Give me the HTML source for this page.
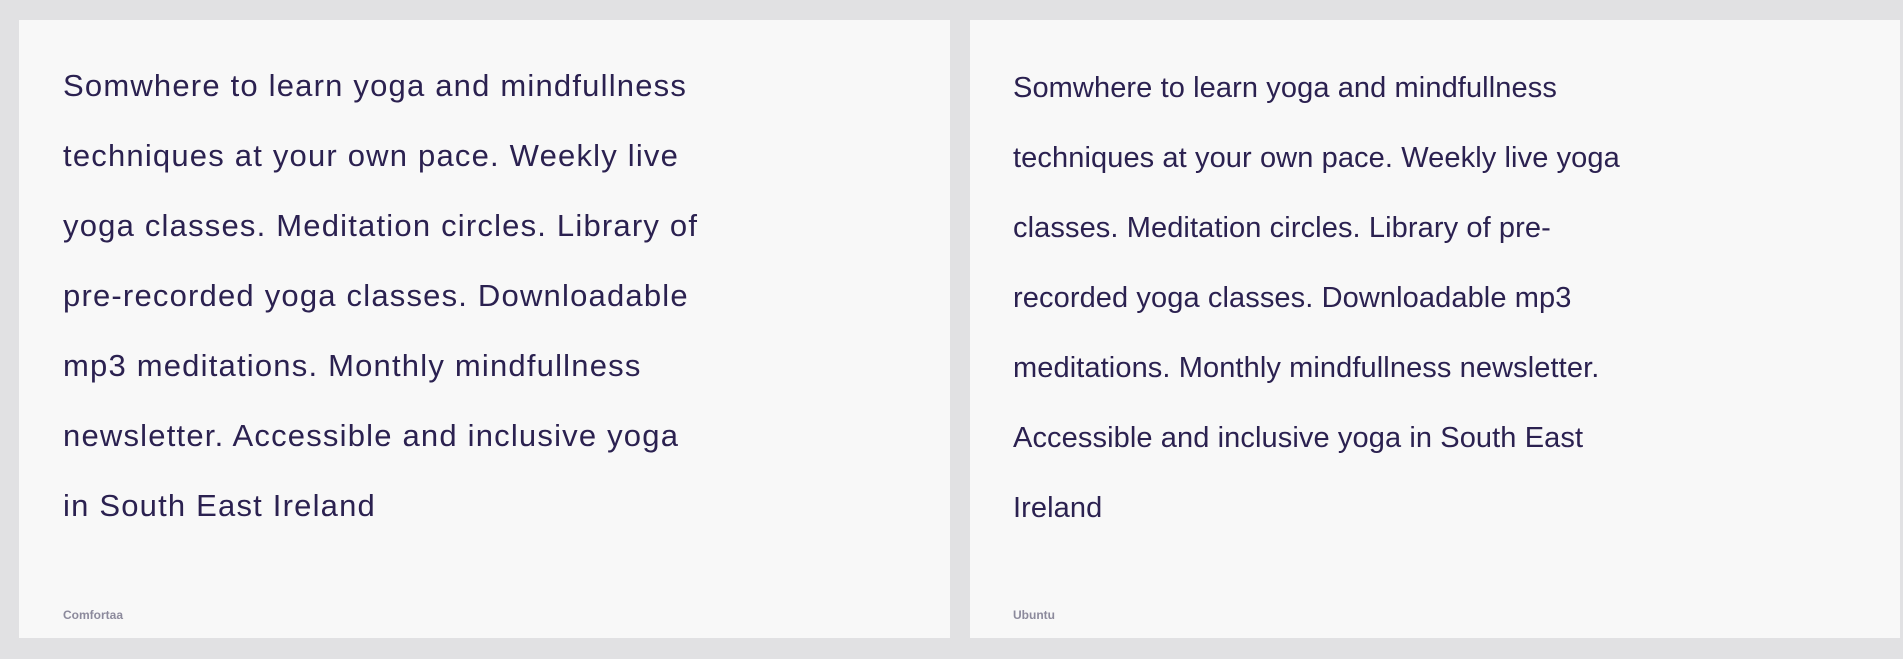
<!DOCTYPE html>
<html><head><style>
html,body{margin:0;padding:0;}
body{width:1903px;height:659px;background:#e1e1e3;position:relative;overflow:hidden;font-family:"Liberation Sans",sans-serif;}
.card{position:absolute;top:20px;height:618px;background:#f8f8f8;}
.t{position:absolute;color:#2b2150;font-size:31px;line-height:70px;white-space:nowrap;}
.l{position:absolute;top:608px;font-size:12px;color:#8c8a9c;font-weight:bold;}
</style></head><body>
<div class="card" style="left:19px;width:931px;"></div>
<div class="card" style="left:970px;width:930px;"></div>
<div class="t" style="left:63px;top:51px;letter-spacing:1.2px;">Somwhere to learn yoga and mindfullness<br>techniques at your own pace. Weekly live<br>yoga classes. Meditation circles. Library of<br>pre-recorded yoga classes. Downloadable<br>mp3 meditations. Monthly mindfullness<br>newsletter. Accessible and inclusive yoga<br>in South East Ireland</div>
<div class="l" style="left:63px;">Comfortaa</div>
<div class="t" style="left:1013px;top:53px;font-size:29px;letter-spacing:0.1px;">Somwhere to learn yoga and mindfullness<br>techniques at your own pace. Weekly live yoga<br>classes. Meditation circles. Library of pre-<br>recorded yoga classes. Downloadable mp3<br>meditations. Monthly mindfullness newsletter.<br>Accessible and inclusive yoga in South East<br>Ireland</div>
<div class="l" style="left:1013px;">Ubuntu</div>
</body></html>
